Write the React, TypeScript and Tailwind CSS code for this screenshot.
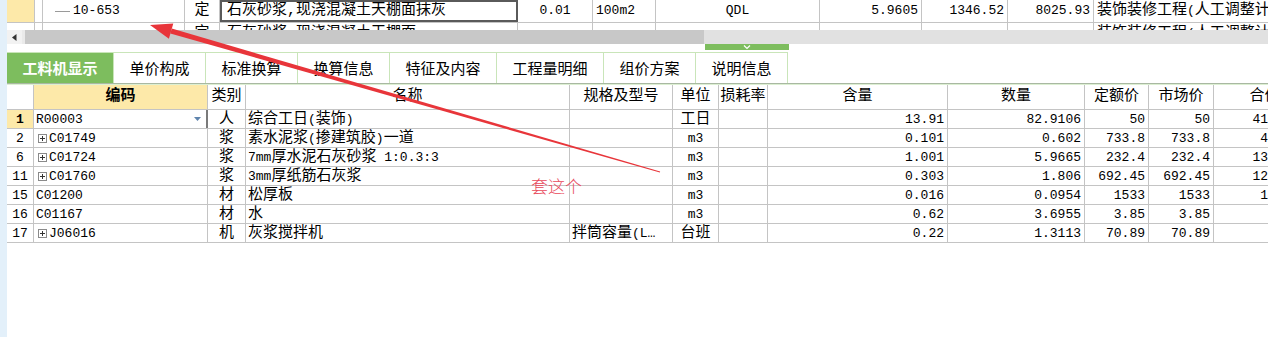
import React from "react";

const mono = "font-['Liberation_Mono','Noto_Sans_CJK_SC',monospace]";

const CJK = /([\u3000-\u9fff\uff00-\uffef]+)/;

const Mixed = ({ text }: { text: string }) => (
  <>
    {text.split(CJK).map((part, i) =>
      CJK.test(part) ? (
        <span key={i} className="text-[15px]">
          {part}
        </span>
      ) : (
        <span key={i} className="text-[13px] whitespace-pre">
          {part}
        </span>
      )
    )}
  </>
);

const Plus = () => (
  <svg width="9" height="9" viewBox="0 0 9 9" className="mr-[2px] shrink-0">
    <rect x="0.5" y="0.5" width="8" height="8" fill="white" stroke="#8a8a8a" />
    <path d="M2 4.5h5M4.5 2v5" stroke="#333" strokeWidth="1" />
  </svg>
);

type Row = {
  no: string;
  code: string;
  plus: boolean;
  kind: string;
  name: string;
  spec: string;
  unit: string;
  rate: string;
  qty: string;
  amount: string;
  price: string;
  market: string;
  total: string;
};

const rows: Row[] = [
  { no: "1", code: "R00003", plus: false, kind: "人", name: "综合工日(装饰)", spec: "", unit: "工日", rate: "", qty: "13.91", amount: "82.9106", price: "50", market: "50", total: "4145.53" },
  { no: "2", code: "C01749", plus: true, kind: "浆", name: "素水泥浆(掺建筑胶)一道", spec: "", unit: "m3", rate: "", qty: "0.101", amount: "0.602", price: "733.8", market: "733.8", total: "441.75" },
  { no: "6", code: "C01724", plus: true, kind: "浆", name: "7mm厚水泥石灰砂浆 1:0.3:3", spec: "", unit: "m3", rate: "", qty: "1.001", amount: "5.9665", price: "232.4", market: "232.4", total: "1386.61" },
  { no: "11", code: "C01760", plus: true, kind: "浆", name: "3mm厚纸筋石灰浆", spec: "", unit: "m3", rate: "", qty: "0.303", amount: "1.806", price: "692.45", market: "692.45", total: "1250.56" },
  { no: "15", code: "C01200", plus: false, kind: "材", name: "松厚板", spec: "", unit: "m3", rate: "", qty: "0.016", amount: "0.0954", price: "1533", market: "1533", total: "146.24" },
  { no: "16", code: "C01167", plus: false, kind: "材", name: "水", spec: "", unit: "m3", rate: "", qty: "0.62", amount: "3.6955", price: "3.85", market: "3.85", total: "14.23" },
  { no: "17", code: "J06016", plus: true, kind: "机", name: "灰浆搅拌机", spec: "拌筒容量(L…", unit: "台班", rate: "", qty: "0.22", amount: "1.3113", price: "70.89", market: "70.89", total: "92.96" },
];

const tabs = [
  { label: "工料机显示", w: "w-[107px]" },
  { label: "单价构成", w: "w-[92px]" },
  { label: "标准换算", w: "w-[92px]" },
  { label: "换算信息", w: "w-[92px]" },
  { label: "特征及内容", w: "w-[107px]" },
  { label: "工程量明细", w: "w-[107px]" },
  { label: "组价方案", w: "w-[92px]" },
  { label: "说明信息", w: "w-[92px]" },
];

const line = "border-r border-[#c4c4c4]";
const cell = `shrink-0 h-full ${line} overflow-hidden whitespace-nowrap flex items-center`;

export default function App() {
  return (
    <div className={`relative flex w-[1268px] h-[337px] overflow-hidden bg-white text-black ${mono}`}>
      {/* left pane edge */}
      <div className="w-[7px] shrink-0 bg-[#e3f0fa]" />

      <div className="flex flex-col flex-1 min-w-0">
        {/* upper grid, clipped */}
        <div className="h-[30px] overflow-hidden shrink-0">
          <div className="flex h-[23px] border-b border-[#c4c4c4]">
            <div className={`${cell} w-[28px] bg-[#fde9a9]`} />
            <div className={`${cell} w-[8px]`} />
            <div className={`${cell} w-[142px] pl-[12px]`}>
              <span className="w-[15px] h-px bg-[#9a9a9a] mr-[3px]" />
              <span className="text-[13px]">10-653</span>
            </div>
            <div className={`${cell} w-[35px] justify-center text-[15px]`}>定</div>
            <div className="shrink-0 h-full w-[298px] border-2 border-[#5a5a5a] flex items-center pl-[5px] text-[15px] whitespace-nowrap overflow-hidden">
              石灰砂浆,现浇混凝土天棚面抹灰
            </div>
            <div className={`${cell} w-[75px] justify-center text-[13px]`}>0.01</div>
            <div className={`${cell} w-[63px] pl-[3px] text-[13px]`}>100m2</div>
            <div className={`${cell} w-[164px] justify-center text-[13px]`}>QDL</div>
            <div className={`${cell} w-[102px] justify-end pr-[3px] text-[13px]`}>5.9605</div>
            <div className={`${cell} w-[86px] justify-end pr-[3px] text-[13px]`}>1346.52</div>
            <div className={`${cell} w-[86px] justify-end pr-[3px] text-[13px]`}>8025.93</div>
            <div className="shrink-0 h-full w-[200px] pl-[3px] flex items-center whitespace-nowrap">
              <Mixed text="装饰装修工程(人工调整计" />
            </div>
          </div>
          <div className="flex h-[22px]">
            <div className={`${cell} w-[28px]`} />
            <div className={`${cell} w-[8px]`} />
            <div className={`${cell} w-[142px]`} />
            <div className={`${cell} w-[35px] justify-center text-[15px]`}>定</div>
            <div className={`${cell} w-[298px] pl-[7px] text-[15px]`}>石灰砂浆,现浇混凝土天棚面</div>
            <div className={`${cell} w-[75px]`} />
            <div className={`${cell} w-[63px]`} />
            <div className={`${cell} w-[164px]`} />
            <div className={`${cell} w-[102px]`} />
            <div className={`${cell} w-[86px]`} />
            <div className={`${cell} w-[86px]`} />
            <div className="shrink-0 h-full w-[200px] pl-[3px] flex items-center whitespace-nowrap">
              <Mixed text="装饰装修工程(人工调整计" />
            </div>
          </div>
        </div>

        {/* horizontal scrollbar */}
        <div className="flex h-[14px] shrink-0 bg-[#e1e1e1]">
          <div className="w-[15px] h-full bg-[#f2f2f2] flex items-center justify-center">
            <svg width="5" height="7" viewBox="0 0 5 7">
              <path d="M4.5 0v7L0 3.5z" fill="#333" />
            </svg>
          </div>
          <div className="w-[3px] h-full bg-[#eaeaea]" />
          <div className="w-[679px] h-full bg-[#c8c8c8]" />
        </div>

        {/* splitter */}
        <div className="h-[8px] shrink-0 pl-[698px]">
          <div className="w-[84px] h-[6px] bg-[#7dbd5e] flex items-center justify-center">
            <svg width="8" height="6" viewBox="0 0 8 6">
              <path d="M1 1.5l3 3 3-3" stroke="white" strokeWidth="1.2" fill="none" />
            </svg>
          </div>
        </div>

        {/* tabs */}
        <div className="flex h-[31px] shrink-0">
          {tabs.map((t, i) => (
            <div
              key={t.label}
              className={`${t.w} shrink-0 h-full flex items-center justify-center border-t border-r border-[#c9e5b9] text-[15px] font-['Noto_Sans_CJK_SC',sans-serif] ${
                i === 0 ? "bg-[#7dbd5e] text-white font-bold" : "bg-white"
              }`}
            >
              {t.label}
            </div>
          ))}
        </div>

        {/* lower grid */}
        <div className="h-px bg-[#a9b8a2] shrink-0" />
        <div className="h-px bg-[#dcefd2] shrink-0" />
        <div className="flex h-[25px] shrink-0 border-b border-[#c4c4c4] text-[15px]">
          <div className={`${cell} w-[27px]`} />
          <div className={`${cell} w-[174px] justify-center bg-[#fde9a9] font-bold`}>编码</div>
          <div className={`${cell} w-[38px] justify-center`}>类别</div>
          <div className={`${cell} w-[324px] justify-center`}>名称</div>
          <div className={`${cell} w-[103px] justify-center`}>规格及型号</div>
          <div className={`${cell} w-[46px] justify-center`}>单位</div>
          <div className={`${cell} w-[49px] justify-center`}>损耗率</div>
          <div className={`${cell} w-[180px] justify-center`}>含量</div>
          <div className={`${cell} w-[137px] justify-center`}>数量</div>
          <div className={`${cell} w-[64px] justify-center`}>定额价</div>
          <div className={`${cell} w-[65px] justify-center`}>市场价</div>
          <div className={`${cell} w-[102px] justify-center`}>合价</div>
        </div>

        {rows.map((r, idx) => (
          <div key={r.no} className="flex h-[19px] shrink-0 border-b border-[#c4c4c4] leading-[19px]">
            <div
              className={`${cell} w-[27px] justify-center text-[13px] ${
                idx === 0 ? "bg-[#fde9a9] font-bold" : ""
              }`}
            >
              {r.no}
            </div>
            <div
              className={`shrink-0 h-full w-[174px] flex items-center whitespace-nowrap overflow-hidden text-[13px] ${
                idx === 0 ? "border-r-2 border-[#7a7a7a] pl-[2px] pr-[5px]" : `${line} ${r.plus ? "pl-[4px]" : "pl-[2px]"}`
              }`}
            >
              {r.plus && <Plus />}
              <span className="flex-1">{r.code}</span>
              {idx === 0 && (
                <svg width="7" height="4" viewBox="0 0 7 4">
                  <path d="M0 0h7L3.5 4z" fill="#5f84ad" />
                </svg>
              )}
            </div>
            <div className={`${cell} w-[38px] justify-center text-[15px]`}>{r.kind}</div>
            <div className={`${cell} w-[324px] pl-[2px]`}>
              <Mixed text={r.name} />
            </div>
            <div className={`${cell} w-[103px] pl-[2px]`}>
              <Mixed text={r.spec} />
            </div>
            <div className={`${cell} w-[46px] justify-center`}>
              <Mixed text={r.unit} />
            </div>
            <div className={`${cell} w-[49px]`} />
            <div className={`${cell} w-[180px] justify-end pr-[3px] text-[13px]`}>{r.qty}</div>
            <div className={`${cell} w-[137px] justify-end pr-[3px] text-[13px]`}>{r.amount}</div>
            <div className={`${cell} w-[64px] justify-end pr-[3px] text-[13px]`}>{r.price}</div>
            <div className={`${cell} w-[65px] justify-end pr-[3px] text-[13px]`}>{r.market}</div>
            <div className={`${cell} w-[102px] justify-end pr-[8px] text-[13px]`}>{r.total}</div>
          </div>
        ))}
      </div>

      {/* annotation overlay */}
      <svg className="absolute inset-0 pointer-events-none" width="1268" height="337" viewBox="0 0 1268 337">
        <polygon points="171.8,28.6 170.3,33.4 659.9,172.6 660.1,171.4" fill="#e8353a" />
        <polygon points="150,25 173.3,23.4 168.9,38.8" fill="#e8353a" />
      </svg>
      <div className="absolute left-[531px] top-[175px] text-[17px] leading-[22px] text-[#e8485a] font-['Noto_Sans_CJK_SC',sans-serif] font-light">
        套这个
      </div>
    </div>
  );
}
